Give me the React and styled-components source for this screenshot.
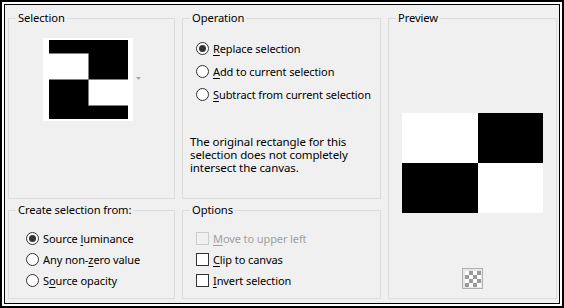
import React from "react";
import styled, { createGlobalStyle } from "styled-components";

const GlobalStyle = createGlobalStyle`
  html, body {
    margin: 0;
    padding: 0;
    background: #ffffff;
  }
  body {
    font-family: "Noto Sans", "Open Sans", sans-serif;
    font-size: 11px;
    letter-spacing: -0.1px;
    color: #000;
  }
`;

const Frame = styled.div`
  width: 564px;
  height: 308px;
  box-sizing: border-box;
  border: 2px solid #000;
  padding: 2px;
  background: #fff;
`;

const Dialog = styled.div`
  height: 100%;
  box-sizing: border-box;
  border: 1px solid #000;
  background: #f0f0f0;
  padding: 6px 2px 4px 3px;
  display: grid;
  grid-template-columns: 167px 199px 169px;
  grid-template-rows: 188px 96px;
  column-gap: 7px;
  row-gap: 4px;
`;

const Group = styled.fieldset`
  margin: 0;
  padding: 0;
  min-width: 0;
  box-sizing: border-box;
  border: 1px solid #dcdcdc;
  grid-row: ${(p) => p.$row || "auto"};
  grid-column: ${(p) => p.$col || "auto"};
`;

const Legend = styled.legend`
  margin-left: 7px;
  padding: 0 2px;
  font-size: 11.2px;
  line-height: 14px;
  color: #000;
`;

const SelectionBody = styled.div`
  display: flex;
  align-items: center;
  gap: 3px;
  padding: 13px 0 0 34px;
`;

const DropArrow = styled.svg`
  display: block;
  margin-top: -2px;
`;

const List = styled.div`
  display: flex;
  flex-direction: column;
  padding: ${(p) => p.$pad};
`;

const Row = styled.label`
  display: flex;
  align-items: center;
  gap: 4px;
  height: ${(p) => p.$h}px;
  font-size: 11px;
  color: ${(p) => (p.$disabled ? "#a0a0a0" : "#000")};
  white-space: nowrap;
`;

const Radio = styled.span`
  width: 13px;
  height: 13px;
  box-sizing: border-box;
  border-radius: 50%;
  border: 1px solid #333;
  background: #fff;
  display: flex;
  align-items: center;
  justify-content: center;
  flex: none;

  &::after {
    content: "";
    width: 7px;
    height: 7px;
    border-radius: 50%;
    background: #333;
    display: ${(p) => (p.$checked ? "block" : "none")};
  }
`;

const Check = styled.span`
  width: 13px;
  height: 13px;
  box-sizing: border-box;
  border: 1px solid ${(p) => (p.$disabled ? "#cccccc" : "#333")};
  background: ${(p) => (p.$disabled ? "#f0f0f0" : "#fff")};
  flex: none;
`;

const Key = styled.span`
  text-decoration: underline;
  text-underline-offset: 2px;
`;

const Note = styled.p`
  margin: 29px 0 0 7px;
  font-size: 11.5px;
  line-height: 13px;
  width: 170px;
`;

const PreviewBody = styled.div`
  display: flex;
  flex-direction: column;
  align-items: center;
  padding-top: 88px;
  gap: 55px;
`;

const Pic = styled.svg`
  display: block;
`;

const Label = ({ text, hot }) => {
  const i = text.indexOf(hot);
  return (
    <span>
      {text.slice(0, i)}
      <Key>{hot}</Key>
      {text.slice(i + hot.length)}
    </span>
  );
};

const operations = [
  { text: "Replace selection", hot: "R", checked: true },
  { text: "Add to current selection", hot: "A" },
  { text: "Subtract from current selection", hot: "S" },
];

const sources = [
  { text: "Source luminance", hot: "l", checked: true },
  { text: "Any non-zero value", hot: "z" },
  { text: "Source opacity", hot: "o" },
];

const options = [
  { text: "Move to upper left", hot: "M", disabled: true },
  { text: "Clip to canvas", hot: "C" },
  { text: "Invert selection", hot: "I" },
];

const Thumbnail = () => (
  <Pic width="90" height="83" viewBox="0 0 90 83">
    <rect width="90" height="83" fill="#fff" />
    <g transform="translate(6 2)">
      <rect width="79" height="79" fill="#000" />
      <rect x="0" y="13" width="39" height="26" fill="#fff" />
      <rect x="39" y="39" width="40" height="26" fill="#fff" />
      <g stroke="#808080" strokeWidth="1" fill="none">
        <path d="M0 13.5H39.5V65.5H79" />
        <path d="M0 39.5H79" />
      </g>
    </g>
  </Pic>
);

const PreviewImage = () => (
  <Pic width="141" height="100" viewBox="0 0 141 100">
    <rect x="0" y="0" width="76" height="50" fill="#fff" />
    <rect x="76" y="0" width="65" height="50" fill="#000" />
    <rect x="0" y="50" width="76" height="50" fill="#000" />
    <rect x="76" y="50" width="65" height="50" fill="#fff" />
  </Pic>
);

const TransparencyIcon = () => {
  const cells = [];
  for (let r = 0; r < 4; r++) {
    for (let c = 0; c < 4; c++) {
      cells.push(
        <rect
          key={`${r}-${c}`}
          x={3 + c * 4}
          y={3 + r * 4}
          width="4"
          height="4"
          fill={(r + c) % 2 === 0 ? "#fff" : "#9a9a9a"}
        />
      );
    }
  }
  return (
    <Pic width="21" height="21" viewBox="0 0 21 21">
      <rect x="0.5" y="0.5" width="20" height="20" fill="#e6e6e6" stroke="#b0b0b0" />
      {cells}
    </Pic>
  );
};

const App = () => {
  return (
    <>
      <GlobalStyle />
      <Frame>
        <Dialog>
          <Group $row="1" $col="1">
            <Legend>Selection</Legend>
            <SelectionBody>
              <Thumbnail />
              <DropArrow width="5" height="3" viewBox="0 0 5 3">
                <path d="M0 0H5L2.5 3Z" fill="#a8a8a8" />
              </DropArrow>
            </SelectionBody>
          </Group>

          <Group $row="1" $col="2">
            <Legend>Operation</Legend>
            <List $pad="12px 0 0 13px">
              {operations.map((o) => (
                <Row key={o.text} $h={23}>
                  <Radio $checked={o.checked} />
                  <Label text={o.text} hot={o.hot} />
                </Row>
              ))}
            </List>
            <Note>
              The original rectangle for this selection does not completely
              intersect the canvas.
            </Note>
          </Group>

          <Group $row="1 / span 2" $col="3">
            <Legend>Preview</Legend>
            <PreviewBody>
              <PreviewImage />
              <TransparencyIcon />
            </PreviewBody>
          </Group>

          <Group $row="2" $col="1">
            <Legend>Create selection from:</Legend>
            <List $pad="11px 0 0 17px">
              {sources.map((o) => (
                <Row key={o.text} $h={21}>
                  <Radio $checked={o.checked} />
                  <Label text={o.text} hot={o.hot} />
                </Row>
              ))}
            </List>
          </Group>

          <Group $row="2" $col="2">
            <Legend>Options</Legend>
            <List $pad="11px 0 0 13px">
              {options.map((o) => (
                <Row key={o.text} $h={21} $disabled={o.disabled}>
                  <Check $disabled={o.disabled} />
                  <Label text={o.text} hot={o.hot} />
                </Row>
              ))}
            </List>
          </Group>
        </Dialog>
      </Frame>
    </>
  );
};

export default App;
